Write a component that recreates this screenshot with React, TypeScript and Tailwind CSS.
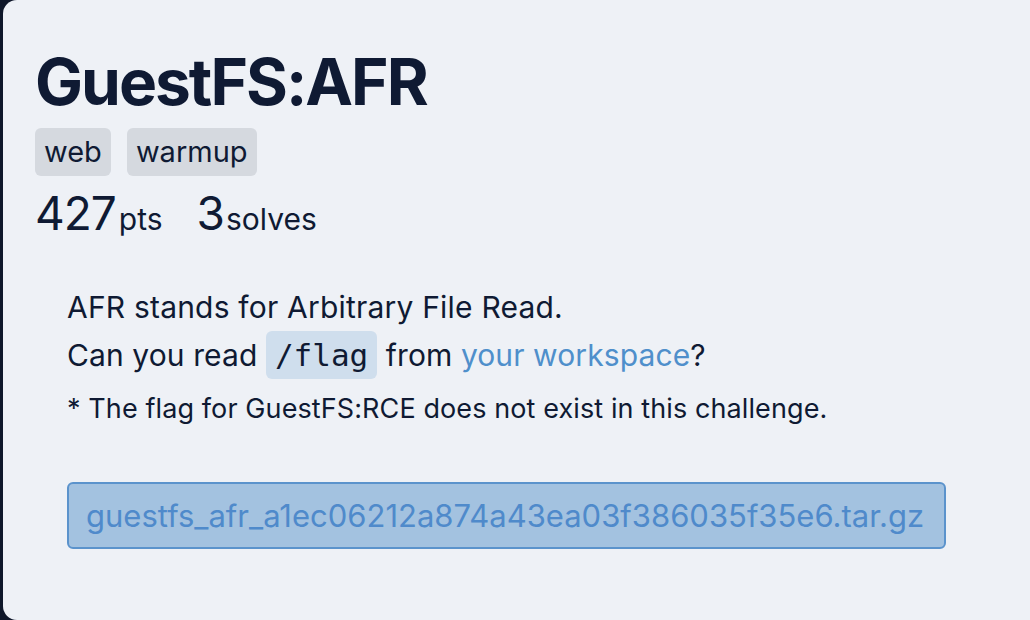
export default function App() {
  return (
    <div className="min-h-screen bg-[#0f172a] pl-[3px] font-['Inter',sans-serif] text-[#0f1a33]">
      <div className="min-h-[620px] rounded-l-[14px] bg-[#eef1f6] pl-[32px] pt-[50px]">
        {/* Header */}
        <h1 className="text-[64px] leading-none font-bold tracking-[-2px]">GuestFS:AFR</h1>
        <div className="mt-[14px] flex gap-[16px]">
          <span className="rounded-md bg-[#d5d9df] px-[9px] h-[48px] flex items-center text-[29px]">web</span>
          <span className="rounded-md bg-[#d5d9df] px-[9px] h-[48px] flex items-center text-[29px]">warmup</span>
        </div>
        <div className="mt-[9px] flex items-baseline gap-[34px]">
          <div>
            <span className="text-[46px] leading-[56px] tracking-[-1px]">427</span>
            <span className="ml-[3px] text-[30px]">pts</span>
          </div>
          <div>
            <span className="text-[46px] leading-[56px]">3</span>
            <span className="ml-[1px] text-[30px]">solves</span>
          </div>
        </div>

        {/* Description */}
        <div className="mt-[41px] pl-[32px]">
          <p className="text-[30px] leading-[48px] tracking-[0.2px]">AFR stands for Arbitrary File Read.</p>
          <p className="text-[30px] leading-[48px] tracking-[0.1px]">
            Can you read{' '}
            <code className="rounded-md bg-[#cfdeed] px-[9px] py-[6px] font-['DejaVu_Sans_Mono',monospace] text-[31px] tracking-normal">/flag</code>{' '}
            from <a className="text-[#4f8fcb]">your workspace</a>?
          </p>
          <p className="mt-[10px] text-[27px] leading-[40px] tracking-[0.1px]">* The flag for GuestFS:RCE does not exist in this challenge.</p>

          <div className="mt-[53px] w-[879px] rounded-md border-2 border-[#5b93cc] bg-[#a3c2e0] px-[17px] py-[12px] text-[31px] leading-[39px] text-[#4f8acb]">
            guestfs_afr_a1ec06212a874a43ea03f386035f35e6.tar.gz
          </div>
        </div>
      </div>
    </div>
  );
}
